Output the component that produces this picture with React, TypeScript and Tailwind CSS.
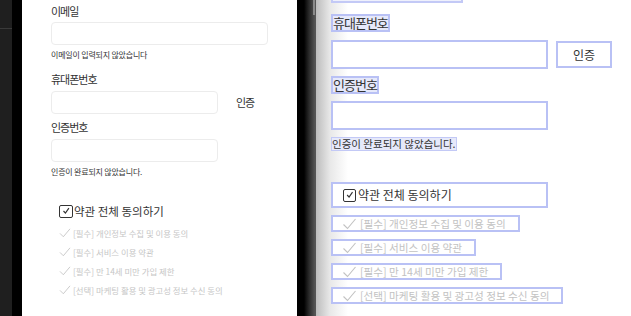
const terms = [
  "[필수] 개인정보 수집 및 이용 동의",
  "[필수] 서비스 이용 약관",
  "[필수] 만 14세 미만 가입 제한",
  "[선택] 마케팅 활용 및 광고성 정보 수신 동의",
];

function Tick({ className }: { className: string }) {
  return (
    <svg viewBox="0 0 14 12" className={className} fill="none" stroke="currentColor" strokeWidth="1.1">
      <path d="M1 6.5 L5 10.5 L13 1" />
    </svg>
  );
}

function Checkbox({ size }: { size: string }) {
  return (
    <span className={`flex shrink-0 items-center justify-center rounded-[2px] border-[1.5px] border-[#333] ${size}`}>
      <svg viewBox="0 0 10 10" className="h-[70%] w-[70%]" fill="none" stroke="#333" strokeWidth="1.5">
        <path d="M1.5 5.2 L4 8 L8.5 1.5" />
      </svg>
    </span>
  );
}

export default function App() {
  return (
    <main className="flex h-[316px] w-[631px] overflow-hidden bg-black font-['Noto_Sans_CJK_KR',sans-serif] text-[#333]">
      {/* 왼쪽 가장자리 */}
      <div className="w-[12px] shrink-0 bg-[#1f1f1f] pt-[28px]">
        <div className="h-px bg-[#3a3a3a]" />
      </div>
      <div className="w-[10px] shrink-0" />

      {/* 폼 (실제 화면) */}
      <section className="flex w-[275px] shrink-0 flex-col bg-white pl-[29px] pt-[4px]">
        <p className="text-[11px] leading-[14px] tracking-[-1px]">이메일</p>
        <div className="mt-[4px] h-[23px] w-[217px] rounded-[4px] border border-[#ececec]" />
        <p className="mt-[4px] text-[8px] leading-[12px] tracking-[-0.2px]">이메일이 입력되지 않았습니다</p>

        <p className="mt-[11px] text-[11px] leading-[14px] tracking-[-1px]">휴대폰번호</p>
        <div className="mt-[5px] flex items-center">
          <div className="h-[23px] w-[167px] rounded-[4px] border border-[#ececec]" />
          <span className="ml-[18px] text-[11px] tracking-[-1px]">인증</span>
        </div>

        <p className="mt-[6px] text-[11px] leading-[14px] tracking-[-1px]">인증번호</p>
        <div className="mt-[5px] h-[23px] w-[167px] rounded-[4px] border border-[#ececec]" />
        <p className="mt-[4px] text-[8px] leading-[12px] tracking-[-0.2px]">인증이 완료되지 않았습니다.</p>

        <div className="mt-[25px] flex items-center gap-[1px] pl-[8px] leading-[16px]">
          <Checkbox size="h-[13px] w-[14px]" />
          <span className="text-[11.5px]">약관 전체 동의하기</span>
        </div>
        <ul className="mt-[7px] flex flex-col gap-[5px] pl-[8px] text-[#c6c6c6]">
          {terms.map((t) => (
            <li key={t} className="flex items-center gap-[2px] text-[8.4px] leading-[14px]">
              <Tick className="h-[10px] w-[12px]" />
              <span>{t}</span>
            </li>
          ))}
        </ul>
      </section>

      {/* 사이 */}
      <div className="relative w-[19px] shrink-0 bg-[linear-gradient(to_right,#000_0,#000_7px,#2a2a2a_12px,#555_18px)]">
        <div className="absolute right-[1px] top-0 h-[15px] w-[2px] bg-[#8a8a8a]" />
      </div>

      {/* 검사 화면 */}
      <section className="flex flex-1 flex-col bg-[linear-gradient(to_right,#bcbcbc_0,#e8e8e8_14px,#ffffff_32px)] pl-[15px]">
        <div className="h-[3px] w-[132px] border-x-2 border-b-2 border-[#c3c9f6] bg-[#eef0fc]" />

        <span className="mt-[11px] self-start border-2 border-[#b9c1f5] bg-[#e6e9fa] text-[13px] leading-[14px] tracking-[-1px]">
          휴대폰번호
        </span>
        <div className="mt-[8px] flex items-center gap-[8px]">
          <div className="h-[29px] w-[217px] border-2 border-[#b9c1f5] bg-white" />
          <div className="flex h-[27px] w-[56px] items-center justify-center border-2 border-[#b9c1f5] bg-white text-[12px]">
            인증
          </div>
        </div>

        <span className="mt-[7px] self-start border-2 border-[#b9c1f5] bg-[#e6e9fa] text-[13px] leading-[14px] tracking-[-1px]">
          인증번호
        </span>
        <div className="mt-[7px] h-[29px] w-[217px] border-2 border-[#b9c1f5] bg-white" />
        <span className="mt-[7px] self-start border border-[#c3c9f6] bg-[#e6e9fa] text-[10.5px] leading-[12px]">
          인증이 완료되지 않았습니다.
        </span>

        <div className="mt-[31px] flex h-[26px] w-[217px] items-center gap-[2px] border-2 border-[#b9c1f5] bg-white pl-[10px]">
          <Checkbox size="h-[13px] w-[13px]" />
          <span className="text-[12px]">약관 전체 동의하기</span>
        </div>
        <ul className="mt-[7px] flex flex-col gap-[7px] text-[#c2c2c2]">
          {terms.map((t) => (
            <li
              key={t}
              className="flex h-[17px] items-center gap-[3px] self-start border-2 border-[#b9c1f5] bg-white pl-[9px] pr-[12px] text-[10.6px]"
            >
              <Tick className="h-[12px] w-[15px]" />
              <span>{t}</span>
            </li>
          ))}
        </ul>
      </section>
    </main>
  );
}
